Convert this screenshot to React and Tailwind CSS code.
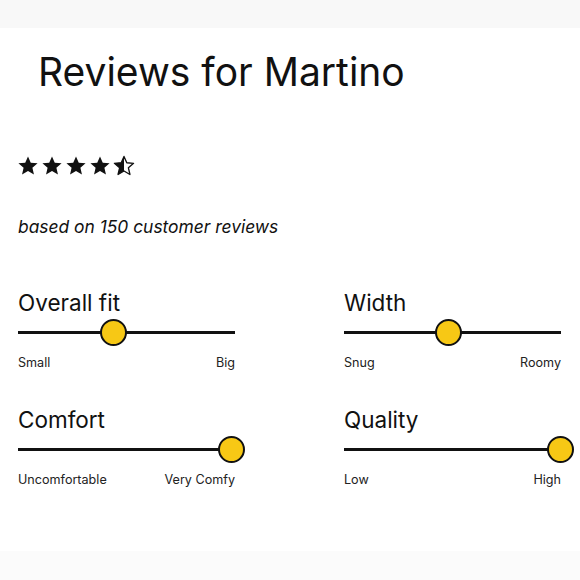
import React from "react"

const STAR = "M12 2.5l2.9 6.6 7.1.6-5.4 4.7 1.6 7-6.2-3.7-6.2 3.7 1.6-7L2 9.7l7.1-.6z"

const Star = ({ half }) => (
  <svg width="24" height="23" viewBox="0 0 24 24">
    <defs>
      <clipPath id="lefthalf">
        <rect x="0" y="0" width="12" height="24" />
      </clipPath>
    </defs>
    {half ? (
      <>
        <path d={STAR} fill="none" stroke="#111" strokeWidth="1.4" strokeLinejoin="round" />
        <path d={STAR} fill="#111" clipPath="url(#lefthalf)" />
      </>
    ) : (
      <path d={STAR} fill="#111" />
    )}
  </svg>
)

const Slider = ({ title, value, low, high }) => (
  <div className="flex flex-col">
    <h3 className="text-[22.5px] leading-[28px] text-[#111]">{title}</h3>
    <div className="relative w-[217px] h-[27px] mt-[2px]">
      <div className="absolute left-0 right-0 top-[12px] h-[3px] bg-[#111]" />
      <div
        className="absolute top-0 w-[27px] h-[27px] -ml-[13px] rounded-full bg-[#f7c815] border-2 border-[#111]"
        style={{ left: `${value}%` }}
      />
    </div>
    <div className="flex justify-between w-[217px] mt-[9px] text-[12.6px] leading-[16px] text-[#222]">
      <span>{low}</span>
      <span>{high}</span>
    </div>
  </div>
)

const App = () => {
  return (
    <div
      className="w-[580px] h-[580px] bg-white flex flex-col overflow-hidden"
      style={{ fontFamily: '"Inter", "Liberation Sans", sans-serif' }}
    >
      <div className="h-[28px] bg-[#f8f8f8]" />
      <h1 className="pl-[38px] mt-[20px] text-[39px] leading-[48px] text-[#111]">Reviews for Martino</h1>

      <div className="flex pl-[16px] mt-[58px]">
        <Star />
        <Star />
        <Star />
        <Star />
        <Star half />
      </div>

      <p className="pl-[18px] mt-[38px] text-[17.4px] leading-[24px] italic text-[#111]">based on 150 customer reviews</p>

      <div className="grid grid-cols-[326px_229px] pl-[18px] mt-[50px] gap-y-[35px]">
        <Slider title="Overall fit" value={44} low="Small" high="Big" />
        <Slider title="Width" value={48} low="Snug" high="Roomy" />
        <Slider title="Comfort" value={98} low="Uncomfortable" high="Very Comfy" />
        <Slider title="Quality" value={99.5} low="Low" high="High" />
      </div>

      <div className="mt-auto h-[29px] bg-[#fbfbfb]" />
    </div>
  )
}

export default App
